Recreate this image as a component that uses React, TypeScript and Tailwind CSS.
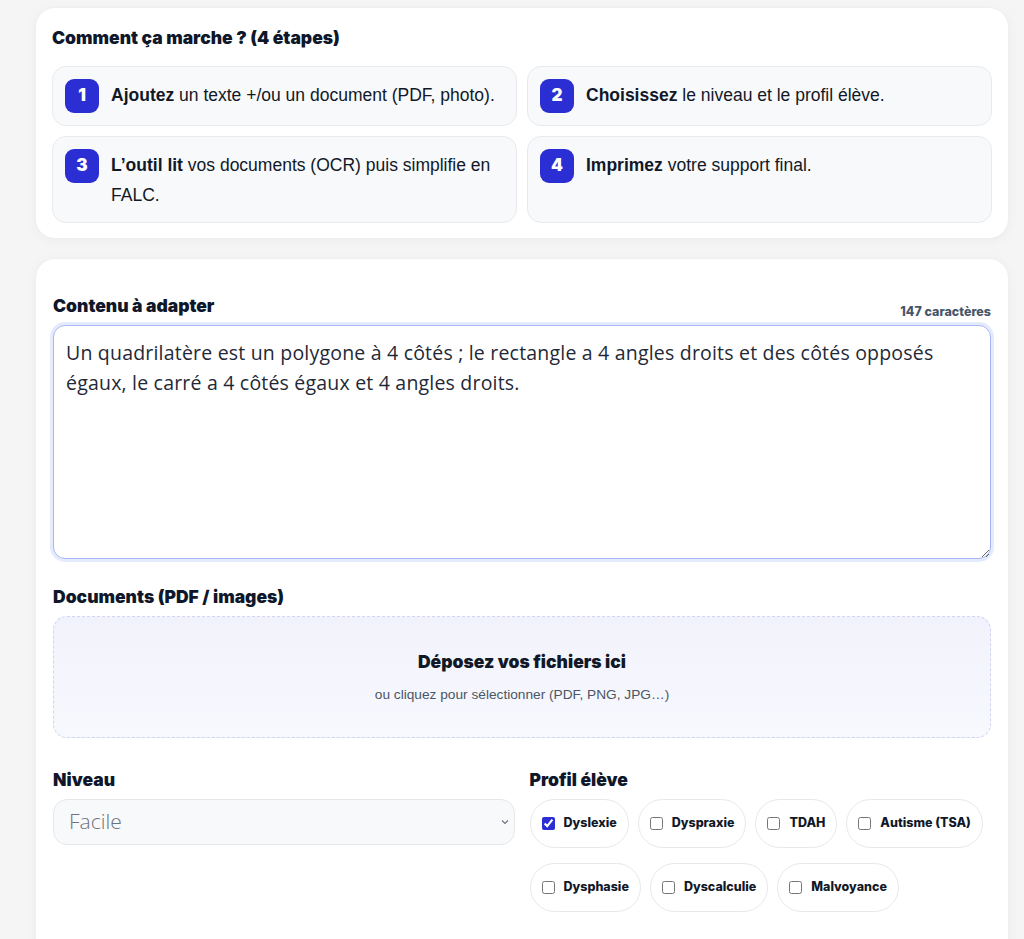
import React from "react";

const heading = { fontFamily: "Inter, 'Liberation Sans', sans-serif" };
const body = { fontFamily: "'Liberation Sans', Arial, sans-serif" };
const round = { fontFamily: "'Open Sans', 'Noto Sans', sans-serif" };

function Badge({ n }: { n: number }) {
  return (
    <div
      className="flex h-[34px] w-[34px] shrink-0 items-center justify-center rounded-[9px] bg-[#2b2fd3] text-[17px] font-black text-white"
      style={heading}
    >
      {n}
    </div>
  );
}

function Step({ n, strong, rest }: { n: number; strong: string; rest: string }) {
  return (
    <div className="flex items-start gap-[12px] rounded-[14px] border border-[#e8eaee] bg-[#f8f9fb] px-[12px] py-[12px]">
      <Badge n={n} />
      <p className="pt-[1px] text-[17.5px] leading-[30px] text-[#111827]" style={body}>
        <strong className="font-bold">{strong}</strong> {rest}
      </p>
    </div>
  );
}

function Chip({ label, checked = false }: { label: string; checked?: boolean }) {
  return (
    <label className="flex h-[49px] items-center gap-[9px] rounded-full border border-[#e7e8ec] bg-white px-[11px]">
      <input
        type="checkbox"
        defaultChecked={checked}
        className="h-[13px] w-[13px] accent-[#2b2fd3]"
      />
      <span className="text-[12.5px] font-extrabold text-[#111827]" style={heading}>
        {label}
      </span>
    </label>
  );
}

export default function App() {
  return (
    <div className="h-[939px] overflow-hidden bg-[#f5f5f6] pl-[35px] pr-[15px] pt-[7px]">
      {/* Steps card */}
      <section className="rounded-[20px] border border-[#efeff1] bg-white px-[16px] pb-[15px] pt-[16px] shadow-[0_2px_12px_rgba(0,0,0,0.04)]">
        <h2 className="mb-[14px] text-[17.5px] font-black leading-[28px] text-[#0f172a]" style={heading}>
          Comment ça marche ? (4 étapes)
        </h2>
        <div className="grid grid-cols-2 gap-[10px]">
          <Step n={1} strong="Ajoutez" rest="un texte +/ou un document (PDF, photo)." />
          <Step n={2} strong="Choisissez" rest="le niveau et le profil élève." />
          <Step n={3} strong="L’outil lit" rest="vos documents (OCR) puis simplifie en FALC." />
          <Step n={4} strong="Imprimez" rest="votre support final." />
        </div>
      </section>

      {/* Form card */}
      <section className="mt-[19px] rounded-[20px] border border-[#efeff1] bg-white px-[17px] pb-[40px] pt-[35px] shadow-[0_2px_12px_rgba(0,0,0,0.04)]">
        <div className="mb-[7px] flex items-end justify-between">
          <label className="text-[17.5px] font-black leading-[24px] text-[#0f172a]" style={heading}>
            Contenu à adapter
          </label>
          <span className="text-[12.5px] font-extrabold leading-[12px] text-[#475569]" style={heading}>
            147 caractères
          </span>
        </div>
        <textarea
          className="block h-[234px] w-full resize-y rounded-[12px] border border-[#a9b6f5] bg-white py-[12px] pl-[12px] pr-[24px] text-[19.5px] font-normal leading-[30px] tracking-[0.2px] text-[#1f2937] shadow-[0_0_0_3px_#e4ebfd] outline-none"
          style={round}
          defaultValue="Un quadrilatère est un polygone à 4 côtés ; le rectangle a 4 angles droits et des côtés opposés égaux, le carré a 4 côtés égaux et 4 angles droits."
        />

        <label className="mt-[26px] mb-[7px] block text-[17.5px] font-black leading-[24px] text-[#0f172a]" style={heading}>
          Documents (PDF / images)
        </label>
        <div className="flex h-[122px] flex-col items-center justify-center rounded-[14px] border border-dashed border-[#cfd5f3] bg-gradient-to-b from-[#f2f2fc] to-[#f7f9fe]">
          <p className="text-[17.5px] font-black leading-[24px] text-[#111827]" style={heading}>
            Déposez vos fichiers ici
          </p>
          <p className="mt-[12px] text-[13.7px] leading-[18px] text-[#4b5563]" style={body}>
            ou cliquez pour sélectionner (PDF, PNG, JPG…)
          </p>
        </div>

        <div className="mt-[30px] grid grid-cols-2 gap-[15px]">
          <div>
            <label className="mb-[7px] block text-[17.5px] font-black leading-[24px] text-[#0f172a]" style={heading}>
              Niveau
            </label>
            <div className="relative">
              <select
                className="block h-[46px] w-full appearance-none rounded-[14px] border border-[#e5e7eb] bg-[#f8f9fb] px-[15px] text-[21px] font-light text-[#6b7280] outline-none"
                style={round}
                defaultValue="Facile"
              >
                <option>Facile</option>
                <option>Moyen</option>
                <option>Difficile</option>
              </select>
              <svg
                className="pointer-events-none absolute right-[5px] top-1/2 h-[10px] w-[10px] -translate-y-1/2 text-[#6b7280]"
                viewBox="0 0 10 10"
                fill="none"
                stroke="currentColor"
                strokeWidth="1.2"
              >
                <path d="M2 3.5 5 6.5 8 3.5" />
              </svg>
            </div>
          </div>
          <div>
            <label className="mb-[7px] block text-[17.5px] font-black leading-[24px] text-[#0f172a]" style={heading}>
              Profil élève
            </label>
            <div className="flex flex-wrap gap-x-[9px] gap-y-[15px]">
              <Chip label="Dyslexie" checked />
              <Chip label="Dyspraxie" />
              <Chip label="TDAH" />
              <Chip label="Autisme (TSA)" />
              <Chip label="Dysphasie" />
              <Chip label="Dyscalculie" />
              <Chip label="Malvoyance" />
            </div>
          </div>
        </div>
        <div className="h-[60px]" />
      </section>
    </div>
  );
}
